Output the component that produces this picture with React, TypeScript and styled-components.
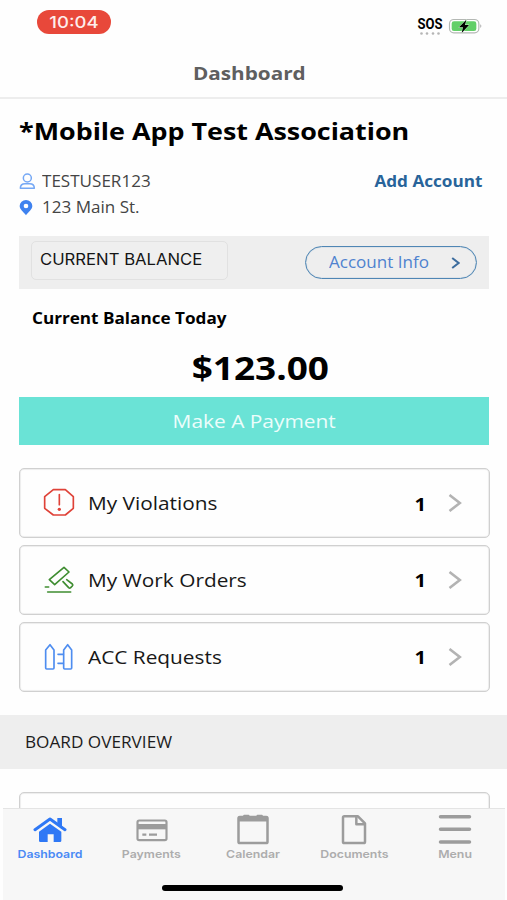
import React from "react";
import styled, { createGlobalStyle } from "styled-components";

const OPEN = '"Open Sans", sans-serif';
const INTER = 'Inter, sans-serif';

const GlobalStyle = createGlobalStyle`
  * { box-sizing: border-box; }
  body { margin: 0; background: #fff; overflow: hidden; }
  button { background: none; border: 0; padding: 0; }
`;

const Screen = styled.main`
  display: flex;
  flex-direction: column;
  width: 507px;
  height: 900px;
  overflow: hidden;
  background: #fefefe;
  font-family: ${OPEN};
  color: #000;
`;

/* Wide-set text: the glyphs are stretched horizontally from the given origin. */
const Text = styled.span<{
  $size: number;
  $wide?: number;
  $weight?: number;
  $color?: string;
  $font?: string;
  $origin?: "left" | "center" | "right";
}>`
  display: inline-block;
  flex: none;
  white-space: nowrap;
  font-family: ${(p) => p.$font ?? OPEN};
  font-size: ${(p) => p.$size}px;
  font-weight: ${(p) => p.$weight ?? 400};
  line-height: 1.375;
  color: ${(p) => p.$color ?? "#000"};
  transform: scaleX(${(p) => p.$wide ?? 1.11});
  transform-origin: ${(p) => p.$origin ?? "left"} center;
`;

const StatusBar = styled.header`
  display: flex;
  justify-content: space-between;
  align-items: flex-start;
  flex: none;
  height: 50px;
  padding: 10px 25.5px 0 37px;
`;

const TimePill = styled.div`
  display: flex;
  align-items: center;
  justify-content: center;
  width: 74px;
  height: 24px;
  border-radius: 12px;
  background: #e8483a;
`;

const Signals = styled.div`
  display: flex;
  align-items: flex-start;
  padding-top: 4.5px;
`;

const Sos = styled.div`
  display: flex;
  flex-direction: column;
  align-items: center;
  width: 26px;
  margin-right: 4.5px;
`;

const SosDots = styled.svg`
  width: 22px;
  height: 3px;
  margin-top: -2px;
`;

const Battery = styled.svg`
  width: 34px;
  height: 16px;
  margin-top: 3px;
`;

const NavBar = styled.div`
  display: flex;
  align-items: center;
  justify-content: center;
  flex: none;
  height: 48.5px;
  padding: 0 8px 2px 0;
  border-bottom: 2px solid #ededed;
`;

const Content = styled.section`
  flex: none;
  height: 709.5px;
  overflow: hidden;
`;

const TitleRow = styled.div`
  display: flex;
  align-items: center;
  height: 65px;
  padding: 0 0 2px 19px;
`;

const Account = styled.div`
  display: flex;
  justify-content: space-between;
  align-items: flex-start;
  padding: 4px 24.5px 0 19px;
`;

const Line = styled.div`
  display: flex;
  align-items: center;
  height: 26.5px;
  padding-top: 1px;
`;

const LineIcon = styled.svg`
  flex: none;
  width: 17px;
  height: 17px;
  margin-right: 6px;
`;

const BalanceBar = styled.div`
  display: flex;
  justify-content: space-between;
  align-items: flex-start;
  width: 470px;
  height: 53.5px;
  margin: 15px 0 0 19px;
  padding: 5px 12px 0 12px;
  background: #eeeeee;
`;

const BalanceTag = styled.div`
  display: flex;
  align-items: center;
  width: 197px;
  height: 39px;
  padding-left: 8px;
  border: 1px solid #e1e1e1;
  border-radius: 5px;
  background: #efefef;
`;

const InfoButton = styled.button`
  display: flex;
  align-items: center;
  justify-content: space-between;
  width: 172px;
  height: 33px;
  margin-top: 5.5px;
  padding: 1px 16px 0 22.5px;
  border: 1.5px solid #4f86b4;
  box-shadow: inset 0 0 1px #4f86b4;
  border-radius: 17px;
`;

const Chevron = styled.svg<{ $w: number; $h: number }>`
  flex: none;
  width: ${(p) => p.$w}px;
  height: ${(p) => p.$h}px;
  fill: none;
`;

const TodayRow = styled.div`
  display: flex;
  align-items: center;
  height: 58px;
  padding: 2px 0 0 31.5px;
`;

const AmountRow = styled.div`
  display: flex;
  align-items: center;
  justify-content: center;
  height: 43px;
  margin-right: -13px;
  padding-bottom: 1px;
`;

const PayButton = styled.button`
  display: flex;
  align-items: center;
  justify-content: center;
  width: 470px;
  height: 48px;
  margin: 7px 0 0 19px;
  padding: 1px 0 0 1px;
  background: #6ae3d6;
`;

const Cards = styled.div`
  display: flex;
  flex-direction: column;
  gap: 6.7px;
  margin: 23.4px 0 0 19px;
`;

const Card = styled.div`
  display: flex;
  align-items: center;
  width: 470.5px;
  height: 70px;
  padding: 0 27px 0 23px;
  border: 1px solid #d0d0d0;
  border-radius: 5px;
  box-shadow: inset 0 0 1px 0.5px #dedede;
`;

const CardIcon = styled.svg`
  flex: none;
  width: 32px;
  height: 32px;
  margin-right: 12.5px;
  fill: none;
  stroke-width: 5;
  stroke-linejoin: round;
  stroke-linecap: round;
`;

const CardCount = styled.div`
  display: flex;
  align-items: center;
  gap: 22px;
  margin-left: auto;
`;

const SectionBar = styled.div`
  display: flex;
  align-items: center;
  height: 54px;
  margin-top: 23.3px;
  padding: 2px 0 0 25px;
  background: #eeeeee;
`;

const NextCard = styled(Card)`
  margin: 23.2px 0 0 19px;
`;

const TabBar = styled.nav`
  display: flex;
  flex-direction: column;
  align-items: center;
  flex: none;
  height: 92px;
  margin: 0 2px 0 3px;
  border-top: 1px solid #e4e4e4;
  background: #f7f7f7;
`;

const Tabs = styled.div`
  display: grid;
  grid-template-columns: repeat(5, 101.2px);
  margin: 3px -2.5px 0 -5px;
`;

const Tab = styled.div`
  display: flex;
  flex-direction: column;
  align-items: center;
`;

const TabIcon = styled.svg`
  width: 34px;
  height: 34px;
  margin-bottom: 1px;
`;

const HomeIndicator = styled.div`
  width: 181px;
  height: 6px;
  margin: 22.5px 3px 0 0;
  border-radius: 3px;
  background: #000;
`;

const cards = [
  {
    label: "My Violations",
    icon: (
      <CardIcon viewBox="129 84 96 96" stroke="#df4238">
        <path d="M160 92H196L220 113V148L196 168H160L134 148V113Z" />
        <path d="M178 107V137" />
        <circle cx="178" cy="151" r="5" fill="#df4238" stroke="none" />
      </CardIcon>
    ),
  },
  {
    label: "My Work Orders",
    icon: (
      <CardIcon viewBox="129 314 96 96" stroke="#3f8d31">
        <path d="M192 324L207 338L164 376L148 361Z" />
        <path d="M189 367L206 385Q209 388 212 385L217 380Q220 377 217 374L200 361" />
        <path d="M143 398H212M136 383H146" />
      </CardIcon>
    ),
  },
  {
    label: "ACC Requests",
    icon: (
      <CardIcon viewBox="129 544 96 96" stroke="#4e8df0">
        <path d="M137 571L150 555L162 571V625Q162 628 159 628H140Q137 628 137 625Z" />
        <path d="M191 571L203 555L215 571V625Q215 628 212 628H194Q191 628 191 625Z" />
        <path d="M174 584H190M174 611H190" />
      </CardIcon>
    ),
  },
];

const GREY = "#9c9c9c";

const tabs = [
  {
    label: "Dashboard",
    active: true,
    icon: (
      <TabIcon viewBox="99 336 102 102" fill="#2f78f5">
        <path d="M105 389L150 357L195 389" fill="none" stroke="#2f78f5" strokeWidth="9" strokeLinecap="round" strokeLinejoin="round" />
        <path d="M172 354H186V382L172 372Z" />
        <path d="M117 395L150 371L184 395V422Q184 426 180 426H161V403H143V426H121Q117 426 117 422Z" />
      </TabIcon>
    ),
  },
  {
    label: "Payments",
    icon: (
      <TabIcon viewBox="404 336 102 102" fill="none" stroke={GREY}>
        <rect x="411.500" y="361.500" width="87" height="59" rx="5" strokeWidth="6.500" />
        <path d="M411 380H499" strokeWidth="16" />
        <path d="M426 404H438M446 404H470" strokeWidth="7" />
      </TabIcon>
    ),
  },
  {
    label: "Calendar",
    icon: (
      <TabIcon viewBox="706.5 336 102 102" fill="none" stroke={GREY}>
        <rect x="714" y="351" width="87" height="78" rx="4" strokeWidth="7.500" />
        <path d="M713 357H802" strokeWidth="15" />
        <path d="M731 347H744M771 347H784" strokeWidth="6" strokeLinecap="round" />
      </TabIcon>
    ),
  },
  {
    label: "Documents",
    icon: (
      <TabIcon viewBox="250 336 102 102" fill="none" stroke={GREY} strokeWidth="7.500" strokeLinejoin="round">
        <path d="M272 349H313L334 370V425Q334 429 330 429H272Q268 429 268 425V353Q268 349 272 349Z" />
        <path d="M308 350V373H333" />
      </TabIcon>
    ),
  },
  {
    label: "Menu",
    icon: (
      <TabIcon viewBox="555.5 336 102 102" fill="none" stroke={GREY} strokeWidth="10.500" strokeLinecap="round">
        <path d="M563 350H650M563 388H650M563 426H650" />
      </TabIcon>
    ),
  },
];

export default function App() {
  return (
    <Screen>
      <GlobalStyle />
      <StatusBar>
        <TimePill>
          <Text $font={INTER} $size={16.5} $wide={1.12} $weight={500} $color="#fdeeec" $origin="center">10:04</Text>
        </TimePill>
        <Signals>
          <Sos>
            <Text $font="Roboto, sans-serif" $size={14.5} $wide={0.9} $weight={700} $origin="center">SOS</Text>
            <SosDots viewBox="0 0 22 3" fill="#b5b5b5">
              <circle cx="2.500" cy="1.500" r="1.300" />
              <circle cx="8" cy="1.500" r="1.300" />
              <circle cx="14" cy="1.500" r="1.300" />
              <circle cx="19.500" cy="1.500" r="1.300" />
            </SosDots>
          </Sos>
          <Battery viewBox="586 52 102 48">
            <rect x="590.500" y="56.500" width="88" height="40" rx="13" fill="#fff" stroke="#b4b8b4" strokeWidth="3.500" />
            <rect x="597" y="62" width="74" height="29" rx="7" fill="#62cf68" />
            <path d="M683 71Q689 76 683 82Z" fill="#a5a5a5" />
            <path d="M641 57L619 80H631L627 97L649 73H637Z" fill="#000" stroke="#d8f5da" strokeWidth="2.500" paintOrder="stroke" />
          </Battery>
        </Signals>
      </StatusBar>

      <NavBar>
        <Text $size={18.5} $wide={1.12} $weight={700} $color="#5f5f5f" $origin="center">Dashboard</Text>
      </NavBar>

      <Content>
        <TitleRow>
          <Text $size={24} $wide={1.12} $weight={700}>*Mobile App Test Association</Text>
        </TitleRow>
        <Account>
          <div>
            <Line>
              <LineIcon viewBox="56 65 51 51" fill="none" stroke="#75a8f5" strokeWidth="4.500">
                <circle cx="81" cy="80" r="12" />
                <path d="M60 111C60 101 66 97 74 97H88C96 97 102 101 102 111Z" strokeLinejoin="round" />
              </LineIcon>
              <Text $size={15.5} $wide={1.1} $color="#444">TESTUSER123</Text>
            </Line>
            <Line>
              <LineIcon viewBox="56 145 51 51">
                <path fillRule="evenodd" fill="#3f82ef" d="M77 194C70 184 58 176 58 166A19 18 0 0 1 96 166C96 176 84 184 77 194ZM77 159a7 7 0 1 0 0 14a7 7 0 1 0 0-14Z" />
              </LineIcon>
              <Text $size={15.5} $wide={1.1} $color="#444">123 Main St.</Text>
            </Line>
          </div>
          <Line>
            <Text $size={15.3} $wide={1.12} $weight={700} $color="#28649a" $origin="right">Add Account</Text>
          </Line>
        </Account>

        <BalanceBar>
          <BalanceTag>
            <Text $font={INTER} $size={15.6} $wide={1.07} $color="#151515">CURRENT BALANCE</Text>
          </BalanceTag>
          <InfoButton>
            <Text $size={15.5} $wide={1.1} $color="#4f82cf">Account Info</Text>
            <Chevron $w={9} $h={12} viewBox="0 0 9 12" stroke="#3d6d9e" strokeWidth="2">
              <path d="M1.200 1L7.600 6L1.200 11" />
            </Chevron>
          </InfoButton>
        </BalanceBar>

        <TodayRow>
          <Text $size={15.4} $wide={1.113} $weight={700}>Current Balance Today</Text>
        </TodayRow>
        <AmountRow>
          <Text $size={33} $wide={1.12} $weight={700} $origin="center">$123.00</Text>
        </AmountRow>
        <PayButton>
          <Text $size={19} $wide={1.1} $color="#ecfdfb" $origin="center">Make A Payment</Text>
        </PayButton>

        <Cards>
          {cards.map((card) => (
            <Card key={card.label}>
              {card.icon}
              <Text $size={19} $wide={1.096} $color="#181818">{card.label}</Text>
              <CardCount>
                <Text $size={18.5} $wide={1.1} $weight={700} $origin="center">1</Text>
                <Chevron $w={14} $h={18} viewBox="0 0 14 18" stroke="#b3b3b3" strokeWidth="2.600">
                  <path d="M1.500 1L11.800 9L1.500 17" />
                </Chevron>
              </CardCount>
            </Card>
          ))}
        </Cards>

        <SectionBar>
          <Text $size={15.7} $wide={1.095} $color="#1c1c1c">BOARD OVERVIEW</Text>
        </SectionBar>
        <NextCard />
      </Content>

      <TabBar>
        <Tabs>
          {tabs.map((tab) => (
            <Tab key={tab.label}>
              {tab.icon}
              <Text
                $font={INTER}
                $size={11}
                $wide={1.12}
                $weight={600}
                $color={tab.active ? "#4a8af5" : "#adadad"}
                $origin="center"
              >
                {tab.label}
              </Text>
            </Tab>
          ))}
        </Tabs>
        <HomeIndicator />
      </TabBar>
    </Screen>
  );
}
